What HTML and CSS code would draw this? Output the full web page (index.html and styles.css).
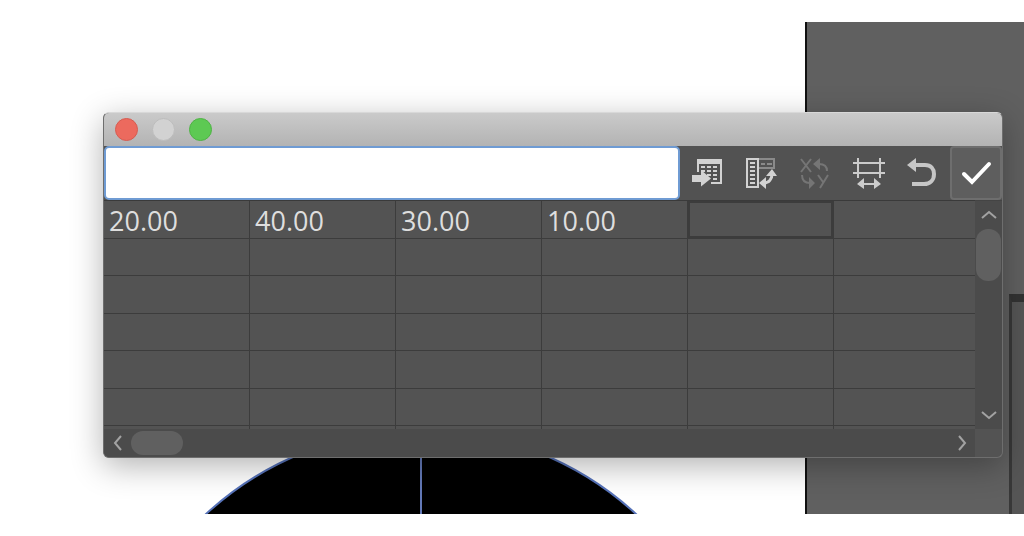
FILE: index.html
```html
<!DOCTYPE html>
<html lang="en">

<head>
    <meta charset="UTF-8">
    <meta name="viewport" content="width=device-width, initial-scale=1">
    <title>Graph Data</title>
    <link rel="stylesheet" href="styles.css">
</head>

<body>
    <div class="stage">
        <svg class="pie" width="640" height="640" viewBox="0 0 640 640">
            <circle cx="320" cy="320" r="317" fill="#000" stroke="#5672b8" stroke-width="2" />
            <path d="M320 2V320" stroke="#6379b8" stroke-width="2" />
        </svg>
        <div class="pasteboard"></div>
        <div class="panel"></div>

        <div class="window">
            <div class="titlebar">
                <button class="light close" aria-label="Close"></button>
                <button class="light minimize" aria-label="Minimize"></button>
                <button class="light zoom" aria-label="Zoom"></button>
            </div>

            <div class="toolbar">
                <input class="entry" type="text" aria-label="Cell value">
                <!-- import data -->
                <button class="tool" aria-label="Import data">
                    <svg width="32" height="32" viewBox="0 0 32 32">
                        <path fill-rule="evenodd" fill="#d2d2d2" d="M6 2H31V27H20V25H29V7H8V15H6Z" />
                        <path stroke="#d2d2d2" stroke-width="2" stroke-dasharray="4 2" d="M10 10H28M10 14H28M16 18H28M22 22H28" />
                        <path fill="#d2d2d2" d="M1 18H10V13L20 21.500L10 29.500V25H1Z" />
                    </svg>
                </button>
                <!-- transpose -->
                <button class="tool" aria-label="Transpose row/column">
                    <svg width="32" height="32" viewBox="0 0 32 32">
                        <rect x="2" y="2" width="11" height="28" fill="none" stroke="#d2d2d2" stroke-width="2" />
                        <path stroke="#d2d2d2" stroke-width="2" d="M5 6H10M5 10H10M5 14H10M5 18H10M5 22H10M5 26H10" />
                        <path fill="none" stroke="#8a8a8a" stroke-width="2" d="M14 2H29V11H14M16 7H20M22 7H27" />
                        <path fill="none" stroke="#d2d2d2" stroke-width="3" d="M27 17C27 22 24 26 19 26" />
                        <path fill="#d2d2d2" d="M27 12L32 19H21ZM14 26L21 20V32Z" />
                    </svg>
                </button>
                <!-- switch x/y -->
                <button class="tool" aria-label="Switch x/y" disabled>
                    <svg width="32" height="32" viewBox="0 0 32 32" fill="none" stroke="#757575" stroke-width="2">
                        <path d="M2 2L12 15M12 2L2 15M19 18L24 25M29 18L21 31" />
                        <path stroke-width="2" d="M20 7C25 7 28 9 28 14M3 18C3 24 7 26 11 26" />
                        <path fill="#757575" stroke="none" d="M14 7L21 1V13ZM16 26L10 20V32Z" />
                    </svg>
                </button>
                <!-- cell style -->
                <button class="tool" aria-label="Cell style">
                    <svg width="36" height="32" viewBox="0 0 36 32" fill="none" stroke="#cbcbcb" stroke-width="2">
                        <path d="M2 6H34M2 16H34M7 1V21M29 1V21M9 27H27" />
                        <path fill="#cbcbcb" stroke="none" d="M6 27L13 21V32ZM30 27L23 21V32Z" />
                    </svg>
                </button>
                <!-- revert -->
                <button class="tool" aria-label="Revert">
                    <svg width="32" height="32" viewBox="0 0 32 32">
                        <path fill="none" stroke="#c6c6c6" stroke-width="4" d="M8 8H18C24 8 27 12 27 17C27 23 23 27 17 27H5" />
                        <path fill="#c6c6c6" d="M0 8L9 1V15Z" />
                    </svg>
                </button>
                <button class="tool apply" aria-label="Apply">
                    <svg width="32" height="32" viewBox="0 0 32 32">
                        <path fill="none" stroke="#fff" stroke-width="4" stroke-linecap="round" d="M4 17L12 25L29 7" />
                    </svg>
                </button>
            </div>

            <div class="body">
                <table class="grid">
                    <colgroup>
                        <col class="col"><col class="col"><col class="col"><col class="col"><col class="col"><col>
                    </colgroup>
                    <tbody>
                        <tr><td>20.00</td><td>40.00</td><td>30.00</td><td>10.00</td><td class="active"></td><td></td></tr>
                        <tr><td></td><td></td><td></td><td></td><td></td><td></td></tr>
                        <tr><td></td><td></td><td></td><td></td><td></td><td></td></tr>
                        <tr><td></td><td></td><td></td><td></td><td></td><td></td></tr>
                        <tr><td></td><td></td><td></td><td></td><td></td><td></td></tr>
                        <tr><td></td><td></td><td></td><td></td><td></td><td></td></tr>
                        <tr class="cut"><td></td><td></td><td></td><td></td><td></td><td></td></tr>
                    </tbody>
                </table>
                <div class="vscroll">
                    <button class="arrow" aria-label="Scroll up">
                        <svg width="16" height="10" viewBox="0 0 16 10"><path d="M1 8L8 2L15 8" /></svg>
                    </button>
                    <div class="thumb"></div>
                    <button class="arrow last" aria-label="Scroll down">
                        <svg width="16" height="10" viewBox="0 0 16 10"><path d="M1 2L8 8L15 2" /></svg>
                    </button>
                </div>
                <div class="hscroll">
                    <button class="arrow" aria-label="Scroll left">
                        <svg width="10" height="16" viewBox="0 0 10 16"><path d="M8 1L2 8L8 15" /></svg>
                    </button>
                    <div class="thumb"></div>
                    <button class="arrow last" aria-label="Scroll right">
                        <svg width="10" height="16" viewBox="0 0 10 16"><path d="M2 1L8 8L2 15" /></svg>
                    </button>
                </div>
                <div class="corner"></div>
            </div>
        </div>
    </div>
</body>

</html>
```
FILE: styles.css
```css
* {
    margin: 0;
    padding: 0;
    box-sizing: border-box;
}

body {
    background-color: #fff;
    padding: 22px 0;
    font-family: "Lucida Grande", "Open Sans", sans-serif;
}

button {
    border: none;
    background: none;
    display: flex;
    align-items: center;
    justify-content: center;
}

.stage {
    position: relative;
    height: calc(100vh - 44px);
    min-height: 440px;
    overflow: hidden;
}

/* artwork under the window */
.pie {
    position: absolute;
    left: 101px;
    top: 405px;
}

.pasteboard {
    position: absolute;
    top: 0;
    bottom: 0;
    right: 0;
    width: 219px;
    background-color: #606060;
    border-left: 2px solid #111;
}

.panel {
    position: absolute;
    top: 272px;
    bottom: 0;
    right: 0;
    width: 15px;
    background-color: #555;
    border-top: 8px solid #333;
    border-left: 3px solid #383838;
}

/* floating window */
.window {
    position: absolute;
    left: 103px;
    right: 21px;
    top: 90px;
    border-radius: 6px;
    background-color: #535353;
    overflow: hidden;
    border: 1px solid #6e6e6e;
    border-top-color: #d8d8d8;
    box-shadow: 0 8px 32px rgba(0, 0, 0, 0.3);
}

.titlebar {
    height: 33px;
    padding: 0 11px;
    display: flex;
    align-items: center;
    gap: 14px;
    background-image: linear-gradient(#cacaca, #b3b3b3);
}

.light {
    width: 23px;
    height: 23px;
    border-radius: 50%;
    border: 1px solid #bcbcbc;
    background-color: #d2d2d2;
}

.close {
    background-color: #ec6a5e;
    border-color: #d65c51;
}

.zoom {
    background-color: #5dc953;
    border-color: #4fb345;
}

.toolbar {
    height: 54px;
    display: flex;
    background-color: #525252;
}

.entry {
    flex: 1;
    min-width: 0;
    border: 2px solid #6f9bd3;
    border-radius: 5px;
    background-color: #fff;
    font-family: inherit;
    font-size: 27px;
    padding: 0 6px;
    outline: none;
}

.tool {
    width: 54px;
    height: 54px;
}

.apply {
    width: 52px;
    background-color: #5e5e5e;
    border: 2px solid #6e6e6e;
    border-radius: 4px;
}

.body {
    display: grid;
    grid-template-columns: 1fr 27px;
    grid-template-rows: auto 28px;
}

.grid {
    width: 100%;
    table-layout: fixed;
    border-collapse: separate;
    border-spacing: 0;
    border-top: 1px solid #3a3a3a;
}

.col {
    width: 146px;
}

.grid td {
    height: 38px;
    border-right: 1px solid #3c3c3c;
    border-bottom: 1px solid #3c3c3c;
    padding: 2px 5px 0;
    font-size: 27px;
    font-weight: 500;
    line-height: 34px;
    color: #dedede;
}

.grid tr:nth-child(even) td {
    height: 37px;
}

.grid td:last-child {
    border-right: none;
}

.grid .active {
    box-shadow: inset 0 0 0 2px #3c3c3c;
}

.grid tr.cut td {
    height: 3px;
    padding: 0;
    line-height: 0;
    border-bottom: none;
}

.vscroll {
    display: flex;
    flex-direction: column;
    align-items: center;
    background-color: #4b4b4b;
    border-top: 1px solid #444;
}

.hscroll {
    display: flex;
    align-items: center;
    background-color: #4b4b4b;
}

.arrow {
    width: 27px;
    height: 28px;
}

.arrow path {
    fill: none;
    stroke: #a2a2a2;
    stroke-width: 2;
}

.thumb {
    background-color: #606060;
    border-radius: 12px;
}

.vscroll .thumb {
    width: 25px;
    height: 52px;
}

.hscroll .thumb {
    width: 52px;
    height: 24px;
}

.vscroll .last {
    margin-top: auto;
}

.hscroll .last {
    margin-left: auto;
}
```
